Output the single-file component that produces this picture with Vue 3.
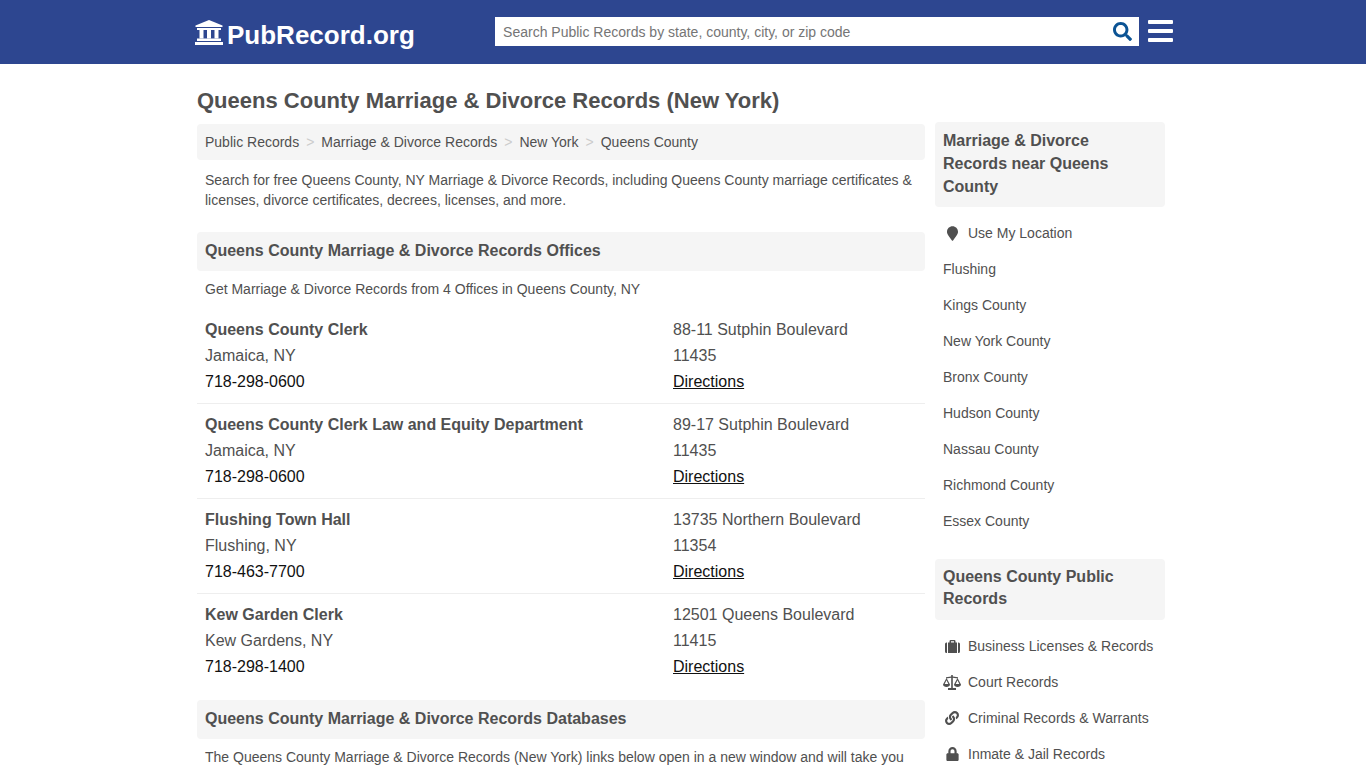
<script setup>
const crumbs = ['Public Records', 'Marriage & Divorce Records', 'New York', 'Queens County']

const offices = [
  { name: 'Queens County Clerk', city: 'Jamaica, NY', phone: '718-298-0600', street: '88-11 Sutphin Boulevard', zip: '11435' },
  { name: 'Queens County Clerk Law and Equity Department', city: 'Jamaica, NY', phone: '718-298-0600', street: '89-17 Sutphin Boulevard', zip: '11435' },
  { name: 'Flushing Town Hall', city: 'Flushing, NY', phone: '718-463-7700', street: '13735 Northern Boulevard', zip: '11354' },
  { name: 'Kew Garden Clerk', city: 'Kew Gardens, NY', phone: '718-298-1400', street: '12501 Queens Boulevard', zip: '11415' }
]

const nearby = ['Flushing', 'Kings County', 'New York County', 'Bronx County', 'Hudson County', 'Nassau County', 'Richmond County', 'Essex County']
</script>

<template>
  <div class="page">
    <header class="topbar">
      <div class="topbar-inner">
        <a class="logo">
          <svg class="logo-icon" viewBox="0 0 28 25" fill="#fff">
            <path d="M14 0 27.500 5.500V7H.5V5.500z" />
            <rect x="2" y="8" width="24" height="2" />
            <rect x="4.500" y="10" width="4" height="8.500" />
            <rect x="12" y="10" width="4" height="8.500" />
            <rect x="19.500" y="10" width="4" height="8.500" />
            <rect x="2" y="18.500" width="24" height="2.500" />
            <rect x="0" y="22" width="28" height="3" />
          </svg>
          <span>PubRecord.org</span>
        </a>
        <div class="search">
          <span class="search-text">Search Public Records by state, county, city, or zip code</span>
          <svg class="search-icon" viewBox="0 0 512 512" fill="#0b5394">
            <path d="M505 442.7L405.3 343c-4.5-4.5-10.6-7-17-7H372c27.6-35.3 44-79.7 44-128C416 93.1 322.9 0 208 0S0 93.1 0 208s93.1 208 208 208c48.3 0 92.7-16.4 128-44v16.3c0 6.4 2.5 12.5 7 17l99.7 99.7c9.4 9.4 24.6 9.4 33.9 0l28.3-28.3c9.4-9.4 9.4-24.6.1-34zM208 336c-70.7 0-128-57.2-128-128 0-70.7 57.2-128 128-128 70.7 0 128 57.2 128 128 0 70.7-57.2 128-128 128z" />
          </svg>
        </div>
        <div class="burger"><i></i><i></i><i></i></div>
      </div>
    </header>

    <div class="wrap">
      <main class="main">
        <h1>Queens County Marriage &amp; Divorce Records (New York)</h1>
        <nav class="crumbs">
          <template v-for="(c, i) in crumbs" :key="c">
            <span>{{ c }}</span>
            <em v-if="i < crumbs.length - 1">&gt;</em>
          </template>
        </nav>
        <p class="intro">Search for free Queens County, NY Marriage &amp; Divorce Records, including Queens County marriage certificates &amp; licenses, divorce certificates, decrees, licenses, and more.</p>

        <h2 class="band">Queens County Marriage &amp; Divorce Records Offices</h2>
        <p class="sub">Get Marriage &amp; Divorce Records from 4 Offices in Queens County, NY</p>

        <div class="offices">
          <div v-for="o in offices" :key="o.name" class="office">
            <div>
              <div class="name">{{ o.name }}</div>
              <div>{{ o.city }}</div>
              <div class="dark">{{ o.phone }}</div>
            </div>
            <div>
              <div>{{ o.street }}</div>
              <div>{{ o.zip }}</div>
              <a class="dark link">Directions</a>
            </div>
          </div>
        </div>

        <h2 class="band db">Queens County Marriage &amp; Divorce Records Databases</h2>
        <p class="sub">The Queens County Marriage &amp; Divorce Records (New York) links below open in a new window and will take you</p>
      </main>

      <aside class="side">
        <h3 class="side-head">Marriage &amp; Divorce Records near Queens County</h3>
        <ul class="side-list">
          <li>
            <span class="ico">
              <svg width="11" height="15" viewBox="0 0 384 512" fill="#505050"><path d="M172.268 501.67C26.97 291.031 0 262.6 0 192 0 85.961 85.961 0 192 0s192 85.961 192 192c0 70.6-26.97 99.031-172.268 309.67-9.535 13.774-29.93 13.773-39.464 0z" /></svg>
            </span>
            Use My Location
          </li>
          <li v-for="n in nearby" :key="n">{{ n }}</li>
        </ul>

        <h3 class="side-head second">Queens County Public Records</h3>
        <ul class="side-list">
          <li>
            <span class="ico">
              <svg width="15" height="13" viewBox="0 0 15 13" fill="#505050">
                <path d="M0 4a1.500 1.500 0 0 1 1.500-1.500H2V13h-.5A1.500 1.500 0 0 1 0 11.500zM13 2.500h.5A1.500 1.500 0 0 1 15 4v7.500a1.500 1.500 0 0 1-1.500 1.500H13z" />
                <path fill-rule="evenodd" d="M3 2.500h1.500V1.200A1.200 1.200 0 0 1 5.700 0h3.600a1.200 1.200 0 0 1 1.200 1.200v1.300H12V13H3zM6 1.300v1.200h3V1.300z" />
              </svg>
            </span>
            Business Licenses &amp; Records
          </li>
          <li>
            <span class="ico">
              <svg width="18" height="15" viewBox="0 0 18 15" fill="#505050">
                <path d="M8.200 0h1.600v1.500L15 2.300v1.200L9.800 2.800V13H13v2H5v-2h3.200V2.800L3 3.500V2.300l5.200-.8z" />
                <path fill-rule="evenodd" d="M3.500 3 7 9.500C7 11 5.400 12 3.500 12S0 11 0 9.500zM3.500 5.300 1.700 9h3.600zM14.500 3 18 9.500c0 1.500-1.600 2.500-3.500 2.500S11 11 11 9.500zM14.500 5.300 12.700 9h3.600z" />
              </svg>
            </span>
            Court Records
          </li>
          <li>
            <span class="ico">
              <svg width="14" height="14" viewBox="0 0 512 512" fill="#505050"><path d="M326.612 185.391c59.747 59.809 58.927 155.698.36 214.59-.11.12-.24.25-.36.37l-67.2 67.2c-59.27 59.27-155.699 59.262-214.96 0-59.27-59.26-59.27-155.7 0-214.96l37.106-37.106c9.84-9.84 26.786-3.3 27.294 10.606.648 17.722 3.826 35.527 9.69 52.721 1.986 5.822.567 12.262-3.783 16.612l-13.087 13.087c-28.026 28.026-28.905 73.66-1.155 101.96 28.024 28.579 74.086 28.749 102.325.51l67.2-67.19c28.191-28.191 28.073-73.757 0-101.83-3.701-3.694-7.429-6.564-10.341-8.569a16.037 16.037 0 0 1-6.947-12.606c-.396-10.567 3.348-21.456 11.698-29.806l21.054-21.055c5.521-5.521 14.182-6.199 20.584-1.731a152.482 152.482 0 0 1 20.522 17.197zM467.547 44.449c-59.261-59.262-155.69-59.27-214.96 0l-67.2 67.2c-.12.12-.25.25-.36.37-58.566 58.892-59.387 154.781.36 214.59a152.454 152.454 0 0 0 20.521 17.196c6.402 4.468 15.064 3.789 20.584-1.731l21.054-21.055c8.35-8.35 12.094-19.239 11.698-29.806a16.037 16.037 0 0 0-6.947-12.606c-2.912-2.005-6.64-4.875-10.341-8.569-28.073-28.073-28.191-73.639 0-101.83l67.2-67.19c28.239-28.239 74.3-28.069 102.325.51 27.75 28.3 26.872 73.934-1.155 101.96l-13.087 13.087c-4.35 4.35-5.769 10.79-3.783 16.612 5.864 17.194 9.042 34.999 9.69 52.721.509 13.906 17.454 20.446 27.294 10.606l37.106-37.106c59.271-59.259 59.271-155.699.001-214.959z" /></svg>
            </span>
            Criminal Records &amp; Warrants
          </li>
          <li>
            <span class="ico">
              <svg width="13" height="14" viewBox="0 0 448 512" fill="#505050"><path d="M400 224h-24v-72C376 68.200 307.800 0 224 0S72 68.200 72 152v72H48c-26.500 0-48 21.500-48 48v192c0 26.500 21.500 48 48 48h352c26.500 0 48-21.500 48-48V272c0-26.500-21.500-48-48-48zm-104 0H152v-72c0-39.700 32.300-72 72-72s72 32.300 72 72v72z" /></svg>
            </span>
            Inmate &amp; Jail Records
          </li>
        </ul>
      </aside>
    </div>
  </div>
</template>

<style scoped>
.page {
  height: 768px;
  overflow: hidden;
  background: #fff;
  color: #505050;
  font-family: "Liberation Sans", Arial, sans-serif;
  font-size: 14px;
}

.topbar {
  height: 64px;
  background: #2d4690;
}

.topbar-inner {
  width: 980px;
  margin: 0 auto;
  display: flex;
  align-items: center;
  height: 64px;
}

.logo {
  display: flex;
  align-items: center;
  width: 301px;
  color: #fff;
  font-size: 26px;
  font-weight: 700;
  margin-top: 7px;
  margin-left: 2px;
}

.logo-icon {
  width: 28px;
  height: 25px;
  margin-right: 4px;
  margin-top: -7px;
}

.search {
  width: 646px;
  height: 29px;
  box-sizing: border-box;
  background: #fff;
  display: flex;
  align-items: center;
  justify-content: space-between;
  padding: 0 7px 0 8px;
  margin-top: -1px;
}

.search-text {
  color: #757575;
}

.search-icon {
  width: 19px;
  height: 19px;
}

.burger {
  margin-left: 9px;
  margin-top: -3px;
  width: 25px;
  display: flex;
  flex-direction: column;
  gap: 5px;
}

.burger i {
  display: block;
  height: 4px;
  background: #fff;
  border-radius: 1px;
}

.wrap {
  width: 968px;
  padding-right: 4px;
  margin: 0 auto;
  display: flex;
  gap: 10px;
}

.main {
  width: 728px;
}

h1 {
  margin: 0;
  padding-top: 24px;
  height: 60px;
  box-sizing: border-box;
  font-size: 22px;
  line-height: 26px;
  font-weight: 700;
}

.crumbs {
  height: 36px;
  box-sizing: border-box;
  background: #f5f5f5;
  border-radius: 4px;
  padding: 0 8px;
  display: flex;
  align-items: center;
}

.crumbs em {
  font-style: normal;
  color: #ccc;
  margin: 0 7px 0 7px;
}

.intro {
  margin: 10px 0 22px;
  padding: 0 8px;
  line-height: 20px;
}

.band {
  margin: 0;
  height: 39px;
  padding: 0 8px;
  background: #f5f5f5;
  border-radius: 4px;
  font-size: 16px;
  line-height: 38px;
  font-weight: 700;
}

.band.db {
  margin-top: 12px;
}

.sub {
  margin: 8px 0 10px;
  padding: 0 8px;
  line-height: 20px;
}

.office {
  display: grid;
  grid-template-columns: 468px 1fr;
  padding: 8px;
  border-bottom: 1px solid #eee;
  font-size: 16px;
  line-height: 26px;
}

.office:last-child {
  border-bottom: 0;
}

.name {
  font-weight: 700;
}

.dark {
  color: #111;
}

.link {
  text-decoration: underline;
}

.side {
  width: 230px;
  padding-top: 58px;
}

.side-head {
  margin: 0;
  padding: 7px 8px 9px;
  background: #f5f5f5;
  border-radius: 4px;
  font-size: 16px;
  line-height: 23px;
  font-weight: 700;
}

.side-head.second {
  margin-top: 20px;
  padding-bottom: 10px;
  line-height: 22px;
}

.side-list {
  list-style: none;
  margin: 8px 0 0;
  padding: 0 8px;
}

.side-list li {
  height: 36px;
  line-height: 36px;
  display: flex;
  align-items: center;
}

.ico {
  width: 18px;
  margin-right: 7px;
  display: flex;
  justify-content: center;
}
</style>

<style>
html, body {
  margin: 0;
  overflow: hidden;
}
</style>
